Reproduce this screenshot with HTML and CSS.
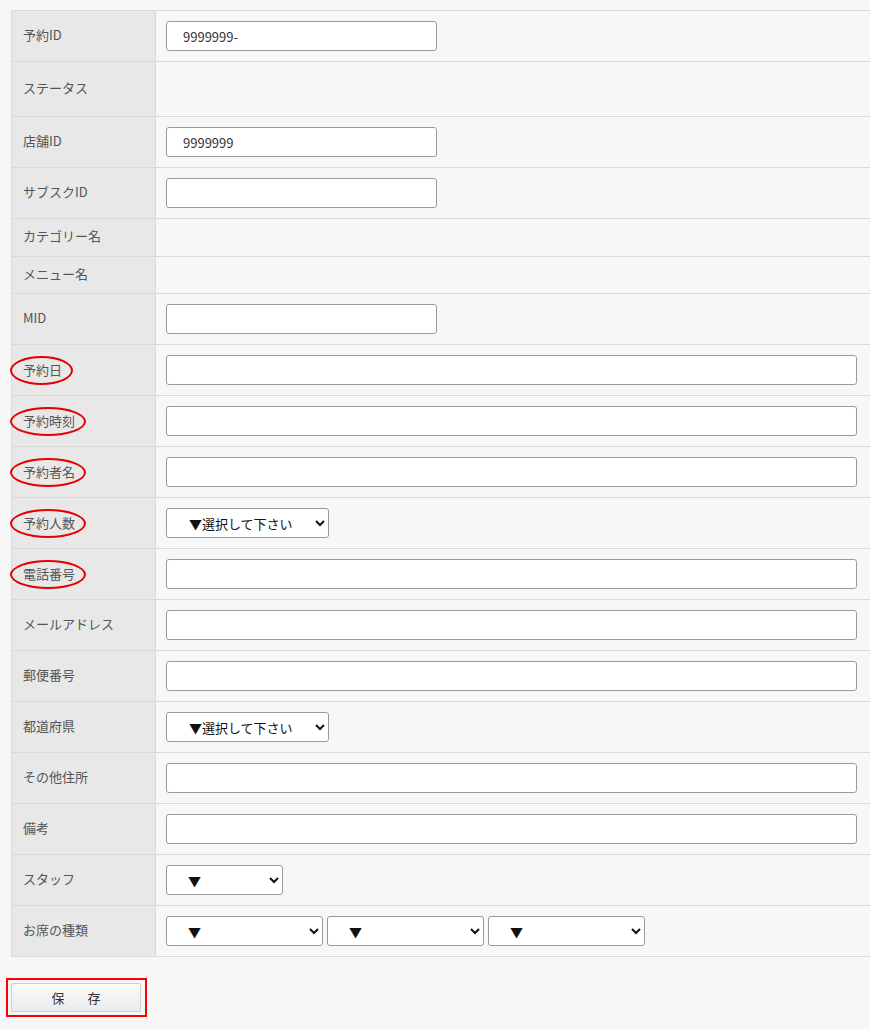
FILE: index.html
```html
<!DOCTYPE html>
<html lang="ja">
<head>
<meta charset="utf-8">
<link rel="stylesheet" href="styles.css">
</head>
<body>
<div class="page">
<table class="form">
<tr><th>予約ID</th><td><input class="in short" type="text" value="9999999-"></td></tr>
<tr class="tall"><th>ステータス</th><td></td></tr>
<tr><th>店舗ID</th><td><input class="in short" type="text" value="9999999"></td></tr>
<tr><th>サブスクID</th><td><input class="in short" type="text"></td></tr>
<tr class="text"><th>カテゴリー名</th><td></td></tr>
<tr class="text2"><th>メニュー名</th><td></td></tr>
<tr><th>MID</th><td><input class="in short" type="text"></td></tr>
<tr class="marked"><th><span class="mark">予約日</span></th><td><input class="in wide" type="text"></td></tr>
<tr class="marked"><th><span class="mark">予約時刻</span></th><td><input class="in wide" type="text"></td></tr>
<tr class="marked"><th><span class="mark">予約者名</span></th><td><input class="in wide" type="text"></td></tr>
<tr class="marked"><th><span class="mark">予約人数</span></th><td><select class="sel choose"><option>▼選択して下さい</option></select></td></tr>
<tr class="marked"><th><span class="mark">電話番号</span></th><td><input class="in wide" type="text"></td></tr>
<tr><th>メールアドレス</th><td><input class="in wide" type="text"></td></tr>
<tr><th>郵便番号</th><td><input class="in wide" type="text"></td></tr>
<tr><th>都道府県</th><td><select class="sel choose"><option>▼選択して下さい</option></select></td></tr>
<tr><th>その他住所</th><td><input class="in wide" type="text"></td></tr>
<tr><th>備考</th><td><input class="in wide" type="text"></td></tr>
<tr><th>スタッフ</th><td><select class="sel staff"><option>▼</option></select></td></tr>
<tr><th>お席の種類</th><td><div class="seats"><select class="sel seat"><option>▼</option></select><select class="sel seat"><option>▼</option></select><select class="sel seat"><option>▼</option></select></div></td></tr>
</table>
<div class="actions">
<div class="redbox"><button class="save" type="button">保　存</button></div>
</div>
</div>
</body>
</html>
```
FILE: styles.css
```css
html, body {
  margin: 0;
  padding: 0;
  background: #f7f7f7;
  overflow: hidden;
}
body {
  font-family: "Noto Sans CJK JP", "Noto Sans", sans-serif;
  font-size: 13px;
  color: #555;
}
.page {
  padding: 10px 0 0 11px;
  width: 870px;
  box-sizing: border-box;
}
.form {
  border-collapse: collapse;
  width: 870px;
  border-top: 1px solid #d9d9d9;
  border-left: 1px solid #d9d9d9;
}
.form th, .form td {
  border-bottom: 1px solid #d9d9d9;
  padding: 10px 0;
  vertical-align: middle;
  line-height: 17px;
  height: 30px;
  box-sizing: content-box;
}
.form th {
  width: 132px;
  background: #e8e8e8;
  text-align: left;
  font-weight: normal;
  padding: 8px 0 12px 11px;
  border-right: 1px solid #d9d9d9;
  color: #555;
  white-space: nowrap;
}
.form tr.marked th {
  padding: 10px 0 10px 11px;
}
.form td {
  padding-left: 10px;
  background: #f7f7f7;
}
.form tr.tall th, .form tr.tall td { height: 34px; }
.form tr.text th, .form tr.text td { height: 17px; }
.form tr.text2 th, .form tr.text2 td { height: 17px; }
.form tr.text2 td { padding-bottom: 9px; }
.form tr.text2 th { padding-bottom: 11px; }
.mark {
  display: inline-block;
  vertical-align: top;
  border: 2px solid #e60000;
  border-radius: 50%;
  padding: 3px 9px 5px 11px;
  margin-left: -13px;
  line-height: 17px;
}
.in {
  display: block;
  box-sizing: border-box;
  height: 30px;
  border: 1px solid #9a9a9a;
  border-radius: 3px;
  background: #fff;
  padding: 0 16px;
  font-family: "Noto Sans CJK JP", "Noto Sans", sans-serif;
  font-size: 13px;
  color: #333;
  margin: 0;
}
.in.short { width: 271px; }
.in.wide { width: 691px; }
.sel {
  box-sizing: border-box;
  height: 30px;
  border: 1px solid #9a9a9a;
  border-radius: 3px;
  background: #fff;
  font-family: "Noto Sans CJK JP", "Noto Sans", sans-serif;
  font-size: 13px;
  color: #111;
  padding: 0 4px 0 17px;
  margin: 0;
  display: block;
}
.sel.choose { width: 163px; padding-left: 18px; }
.sel.staff { width: 117px; }
.seats {
  display: flex;
  gap: 4px;
}
.sel.seat { width: 157px; }
.actions {
  padding: 21px 0 0 0;
  margin-left: -5px;
}
.redbox {
  display: inline-block;
  border: 2px solid #f00;
  padding: 3px 4px 3px 3px;
}
.save {
  display: block;
  width: 130px;
  height: 29px;
  margin: 0;
  border: 1px solid #cfcfcf;
  border-radius: 2px;
  background: linear-gradient(#fbfbfb, #ebebeb);
  font-family: "Noto Sans CJK JP", "Noto Sans", sans-serif;
  font-size: 13px;
  color: #333;
  letter-spacing: 5px;
  padding: 0 0 0 5px;
}
```
